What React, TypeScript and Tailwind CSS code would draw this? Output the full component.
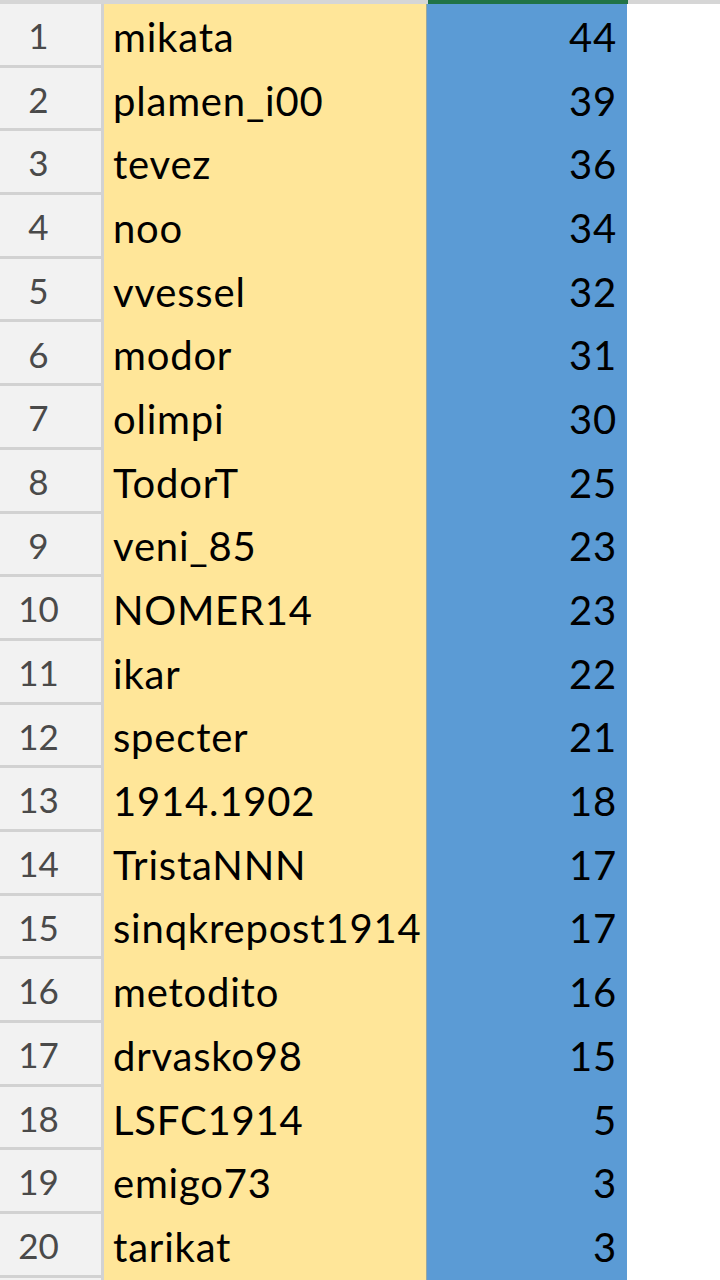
import React from "react";

const rows: [string, number][] = [
  ["mikata", 44],
  ["plamen_i00", 39],
  ["tevez", 36],
  ["noo", 34],
  ["vvessel", 32],
  ["modor", 31],
  ["olimpi", 30],
  ["TodorT", 25],
  ["veni_85", 23],
  ["NOMER14", 23],
  ["ikar", 22],
  ["specter", 21],
  ["1914.1902", 18],
  ["TristaNNN", 17],
  ["sinqkrepost1914", 17],
  ["metodito", 16],
  ["drvasko98", 15],
  ["LSFC1914", 5],
  ["emigo73", 3],
  ["tarikat", 3],
];

export default function App() {
  return (
    <div
      className="w-[720px] h-[1280px] overflow-hidden bg-white"
      style={{ fontFamily: "Lato, 'Open Sans', sans-serif" }}
    >
      <div className="flex h-[4px]">
        <div className="w-[428px] bg-[#d6d6d6]" />
        <div className="w-[200px] bg-[#217346]" />
        <div className="flex-1 bg-[#d6d6d6]" />
      </div>
      <div className="flex">
        <div className="w-[104px] flex flex-col border-r-[3px] border-[#d2d2d2]">
          {rows.map((r, i) => (
            <div
              key={i}
              className="h-[63.7px] shrink-0 bg-[#f2f2f2] border-b-[3px] border-[#d2d2d2] flex items-center justify-center pr-[24px] pt-[2px] text-[#4a4a4a] text-[35px] font-normal"
            >
              {i + 1}
            </div>
          ))}
          <div className="h-[40px] bg-[#f2f2f2]" />
        </div>
        <div className="w-[323px] bg-[#ffe699] border-r border-[#9aa8a0] flex flex-col">
          {rows.map((r, i) => (
            <div
              key={i}
              className="h-[63.7px] shrink-0 flex items-center pl-[9px] text-[40px] tracking-[0.8px] text-black pt-[2px]"
            >
              {r[0]}
            </div>
          ))}
        </div>
        <div className="w-[200px] bg-[#5b9bd5] flex flex-col">
          {rows.map((r, i) => (
            <div
              key={i}
              className="h-[63.7px] shrink-0 flex items-center justify-end pr-[10px] text-[40px] tracking-[0.8px] text-black pt-[2px]"
            >
              {r[1]}
            </div>
          ))}
        </div>
        <div className="flex-1 bg-white" />
      </div>
    </div>
  );
}
